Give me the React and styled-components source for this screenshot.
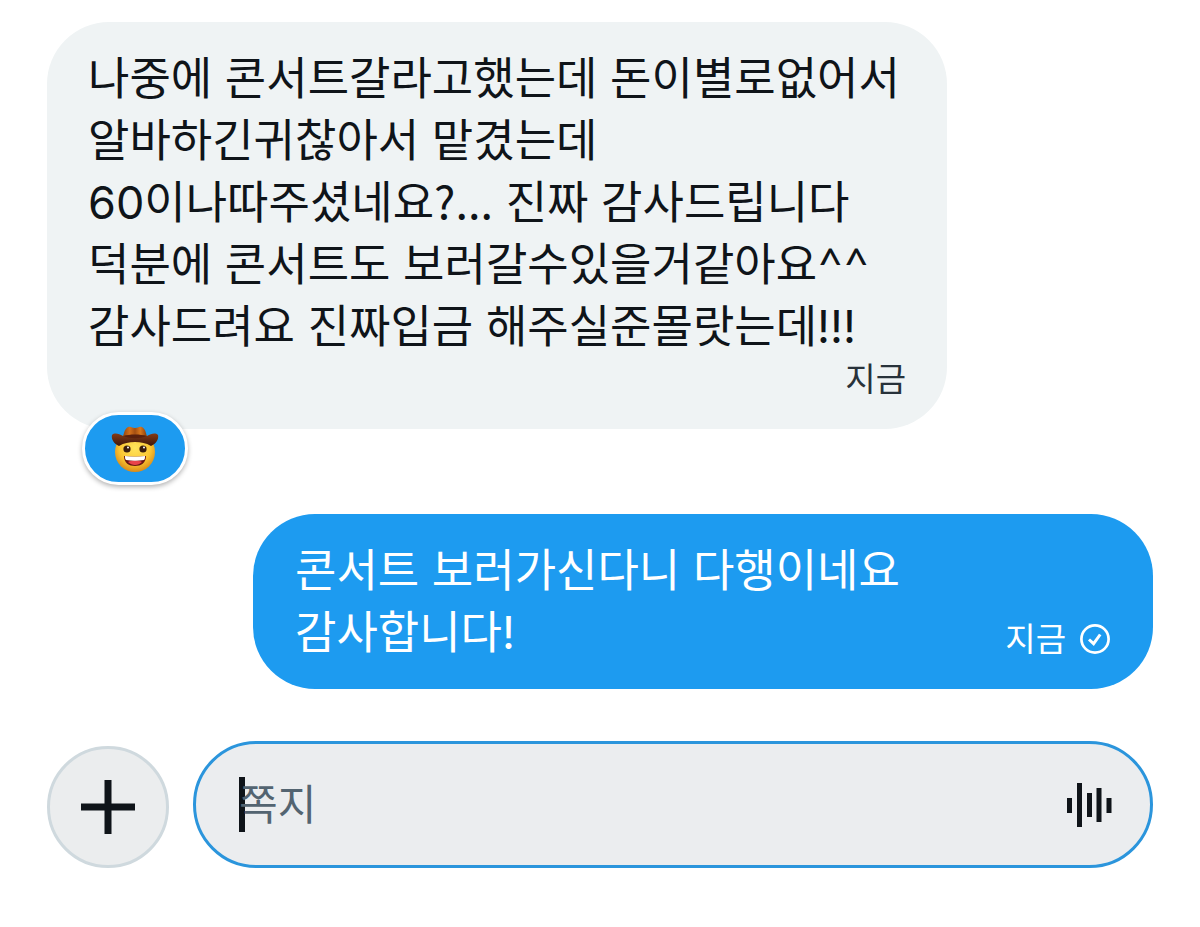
import React from "react";
import styled, { createGlobalStyle } from "styled-components";

const GlobalStyle = createGlobalStyle`
  *, *::before, *::after { box-sizing: border-box; }
  body {
    margin: 0;
    background: #fff;
    color: #0f1419;
    font-family: Inter, "Noto Sans CJK KR", sans-serif;
  }
`;

const Page = styled.main`
  display: flex;
  flex-direction: column;
  padding: 22px 47px 58px;
`;

const Thread = styled.ol`
  display: flex;
  flex-direction: column;
  gap: 85px;
  margin: 0;
  padding: 0;
  list-style: none;
`;

const Message = styled.li`
  display: flex;
  justify-content: ${({ $sent }) => ($sent ? "flex-end" : "flex-start")};
`;

const Bubble = styled.article`
  position: relative;
  display: flex;
  flex-direction: ${({ $sent }) => ($sent ? "row" : "column")};
  justify-content: space-between;
  width: 100%;
  max-width: 900px;
  padding: ${({ $sent }) => ($sent ? "26px 43px 25px 42px" : "26px 41px 28px")};
  border-radius: 62px;
  background: ${({ $sent }) => ($sent ? "#1d9bf0" : "#eff3f4")};
  color: ${({ $sent }) => ($sent ? "#fff" : "#0f1419")};
`;

const Text = styled.p`
  margin: 0;
  font-size: 45px;
  line-height: 62px;
  white-space: pre-line;
`;

const Digits = styled.span`
  font-optical-sizing: none;
  font-variation-settings: "opsz" 14;
`;

const Marks = styled.span`
  font-family: "Noto Sans CJK KR", sans-serif;
  line-height: 1;
`;

const Smile = styled.span`
  font-family: Lato, sans-serif;
  line-height: 1;
`;

const Meta = styled.footer`
  display: flex;
  align-items: center;
  align-self: flex-end;
  gap: 14px;
  font-size: 33px;
  line-height: ${({ $sent }) => ($sent ? "50px" : "43px")};
  color: ${({ $sent }) => ($sent ? "#fff" : "#28323a")};
`;

const Reaction = styled.button`
  position: absolute;
  left: 35px;
  bottom: -56px;
  display: flex;
  align-items: center;
  justify-content: center;
  width: 106px;
  height: 73px;
  padding: 0;
  border: 3px solid #fff;
  border-radius: 37px;
  background: #1d9bf0;
  box-shadow: 0 2px 5px rgba(0, 0, 0, 0.3);
`;

const Composer = styled.form`
  display: flex;
  align-items: flex-end;
  gap: 24px;
  margin-top: 52px;
`;

const AddButton = styled.button`
  display: flex;
  flex: none;
  align-items: center;
  justify-content: center;
  width: 122px;
  height: 122px;
  padding: 0;
  border: 3px solid #cfd9de;
  border-radius: 50%;
  background: #ebedee;
  color: #0f1419;
`;

const Field = styled.label`
  display: flex;
  flex: 1;
  align-items: center;
  min-width: 0;
  height: 127px;
  padding: 0 38px 0 43px;
  border: 3px solid #2b95dc;
  border-radius: 64px;
  background: #ebedef;
`;

const Caret = styled.span`
  flex: none;
  width: 6px;
  height: 55px;
  background: #0f1419;
`;

const MessageInput = styled.input`
  flex: 1;
  min-width: 0;
  height: 64px;
  margin-left: -6px;
  padding: 0;
  border: 0;
  outline: 0;
  background: transparent;
  color: #0f1419;
  font: inherit;
  font-size: 42px;
  &::placeholder { color: #536471; opacity: 1; }
`;

const VoiceButton = styled.button`
  display: flex;
  flex: none;
  padding: 0;
  border: 0;
  background: none;
  color: #0f1419;
`;

const CowboyIcon = () => (
  <svg width="48" height="48" viewBox="0 0 48 48" aria-hidden="true">
    <defs>
      <radialGradient id="face" cx="0.5" cy="0.4" r="0.6">
        <stop offset="0" stopColor="#ffe55c" />
        <stop offset="0.65" stopColor="#fbc532" />
        <stop offset="1" stopColor="#d98a18" />
      </radialGradient>
      <linearGradient id="crown" x1="0" x2="1" y1="0" y2="0">
        <stop offset="0" stopColor="#8a3e0c" />
        <stop offset="0.3" stopColor="#d3701b" />
        <stop offset="0.5" stopColor="#a44f12" />
        <stop offset="0.7" stopColor="#d8781d" />
        <stop offset="1" stopColor="#7a340b" />
      </linearGradient>
      <linearGradient id="brim" x1="0" x2="0" y1="0" y2="1">
        <stop offset="0" stopColor="#853b16" />
        <stop offset="1" stopColor="#3d170b" />
      </linearGradient>
    </defs>
    <circle cx="24" cy="27" r="20" fill="url(#face)" />
    <path d="M11 14C13 10 13 4 17 2c3-1 4 1 7 1s4-2 7-1c4 2 4 8 6 12l-1 3H12z" fill="url(#crown)" />
    <path d="M12 11c7-2 17-2 24 0l1 4H11z" fill="#5a210d" />
    <path d="M1 10c3-3 7-1 11 1 8 3 16 3 24 0 4-2 8-4 11-1 1 4-2 9-7 11-5-3-10-4-16-4s-11 1-16 4C3 19 0 14 1 10z" fill="url(#brim)" />
    <circle cx="16" cy="24" r="3.600" fill="#3a1d0c" />
    <circle cx="32" cy="24" r="3.600" fill="#3a1d0c" />
    <circle cx="17" cy="22.500" r="1" fill="#fff" />
    <circle cx="33" cy="22.500" r="1" fill="#fff" />
    <path d="M13 31c7 1 15 1 22 0 0 7-5 10-11 10s-11-3-11-10z" fill="#6b1712" />
    <path d="M17 37c4-2 10-2 14 0-4 4-10 4-14 0z" fill="#e8434b" />
    <path d="M14 31c7 1 13 1 20 0 0 2 0 3-1 4-6 1-12 1-18 0-1-1-1-2-1-4z" fill="#fff" />
  </svg>
);

const SentIcon = () => (
  <svg width="30" height="30" viewBox="0 0 30 30" fill="none" stroke="currentColor" role="img" aria-label="전송됨">
    <circle cx="15" cy="15" r="13.600" strokeWidth="2.700" />
    <path d="M9 15.500l4.600 4.200 6.600-9.200" strokeWidth="3" />
  </svg>
);

const PlusIcon = () => (
  <svg width="54" height="54" viewBox="0 0 54 54" fill="currentColor" aria-hidden="true">
    <path d="M23.500 0h7v23.500H54v7H30.500V54h-7V30.500H0v-7h23.500z" />
  </svg>
);

const VoiceIcon = () => (
  <svg width="45" height="44" viewBox="0 0 45 44" fill="currentColor" aria-hidden="true">
    <rect x="0" y="15" width="5" height="15" />
    <rect x="10" y="0" width="5" height="44" />
    <rect x="20" y="10" width="5" height="24" />
    <rect x="29.500" y="5" width="5" height="34" />
    <rect x="39.500" y="15" width="5" height="15" />
  </svg>
);

const sent = `콘서트 보러가신다니 다행이네요
감사합니다!`;

export default function App() {
  return (
    <>
      <GlobalStyle />
      <Page>
        <Thread>
          <Message>
            <Bubble>
              <Text>
                나중에 콘서트갈라고했는데 돈이별로없어서
                <br />
                알바하긴귀찮아서 맡겼는데
                <br />
                <Digits>60</Digits>이나따주셨네요<Marks>?...</Marks> 진짜 감사드립니다
                <br />
                덕분에 콘서트도 보러갈수있을거같아요<Smile>^^</Smile>
                <br />
                감사드려요 진짜입금 해주실준몰랏는데!!!
              </Text>
              <Meta>지금</Meta>
              <Reaction type="button" aria-label="반응">
                <CowboyIcon />
              </Reaction>
            </Bubble>
          </Message>
          <Message $sent>
            <Bubble $sent>
              <Text>{sent}</Text>
              <Meta $sent>
                지금
                <SentIcon />
              </Meta>
            </Bubble>
          </Message>
        </Thread>
        <Composer onSubmit={(event) => event.preventDefault()}>
          <AddButton type="button" aria-label="추가">
            <PlusIcon />
          </AddButton>
          <Field>
            <Caret />
            <MessageInput type="text" placeholder="쪽지" aria-label="쪽지" />
            <VoiceButton type="button" aria-label="음성 메시지">
              <VoiceIcon />
            </VoiceButton>
          </Field>
        </Composer>
      </Page>
    </>
  );
}
